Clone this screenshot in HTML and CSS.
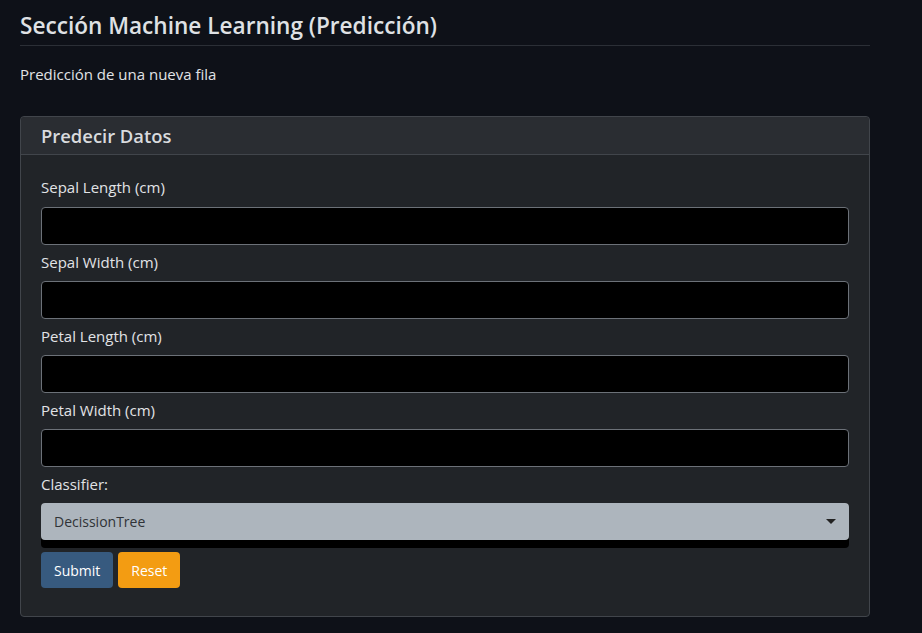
FILE: index.html
```html
<!DOCTYPE html>
<html lang="es">
<head>
<meta charset="utf-8">
<title>Predicción</title>
<link rel="stylesheet" href="styles.css">
</head>
<body>
<main class="container">
  <h2 class="title">Sección Machine Learning (Predicción)</h2>
  <p class="lead">Predicción de una nueva fila</p>
  <section class="card">
    <header class="card-header">Predecir Datos</header>
    <form class="card-body">
      <div class="field">
        <label class="label">Sepal Length (cm)</label>
        <input class="input" type="text">
      </div>
      <div class="field">
        <label class="label">Sepal Width (cm)</label>
        <input class="input" type="text">
      </div>
      <div class="field">
        <label class="label">Petal Length (cm)</label>
        <input class="input" type="text">
      </div>
      <div class="field">
        <label class="label">Petal Width (cm)</label>
        <input class="input" type="text">
      </div>
      <div class="field">
        <label class="label">Classifier:</label>
        <div class="select">
          <span>DecissionTree</span>
          <svg class="caret" width="10" height="6" viewBox="0 0 10 6"><path d="M0 0h10L5 5z" fill="#222"/></svg>
        </div>
      </div>
      <div class="buttons">
        <button type="button" class="btn btn-submit">Submit</button>
        <button type="button" class="btn btn-reset">Reset</button>
      </div>
    </form>
  </section>
</main>
</body>
</html>
```
FILE: styles.css
```css
* { box-sizing: border-box; }
html, body { margin: 0; padding: 0; }
body {
  background: #0e1118;
  color: #e1e3e6;
  font-family: "Open Sans", "Noto Sans", sans-serif;
  font-size: 15px;
}
.container {
  width: 850px;
  margin-left: 20px;
  padding-top: 9px;
}
.title {
  margin: 0;
  font-size: 22.6px;
  font-weight: 600;
  line-height: 34px;
  color: #dfe1e4;
  padding-bottom: 2px;
  border-bottom: 1px solid #2b2f36;
}
.lead {
  margin: 17px 0 31px;
  line-height: 22px;
  font-size: 15px;
}
.card {
  background: #212428;
  border: 1px solid #41454b;
  border-radius: 4px;
}
.card-header {
  background: #2a2d32;
  border-bottom: 1px solid #41454b;
  border-radius: 4px 4px 0 0;
  height: 38px;
  line-height: 37px;
  padding: 0 20px;
  font-size: 18.4px;
  font-weight: 600;
  color: #d9dbde;
}
.card-body {
  padding: 20px 20px 28px;
}
.field { display: flex; flex-direction: column; }
.label {
  line-height: 24px;
  margin-bottom: 8px;
}
.field + .field .label { margin-top: 5px; margin-bottom: 7px; }
.input {
  height: 38px;
  width: 100%;
  background: #000;
  border: 1px solid #6c7178;
  border-radius: 4px;
  margin: 0;
}
.select {
  height: 45px;
  background: #000;
  border-radius: 4px;
  position: relative;
}
.select span {
  display: flex;
  align-items: center;
  height: 37px;
  padding: 0 13px;
  background: #adb5bd;
  border-radius: 4px;
  color: #303337;
  font-size: 14px;
}
.caret { position: absolute; right: 13px; top: 16px; }
.buttons {
  display: flex;
  gap: 5px;
  margin-top: 4px;
}
.btn {
  height: 36px;
  border: none;
  border-radius: 4px;
  color: #fff;
  font-family: inherit;
  font-size: 14px;
  padding: 0 13px;
}
.btn-submit { background: #375a7f; }
.btn-reset { background: #f39c12; }
```
